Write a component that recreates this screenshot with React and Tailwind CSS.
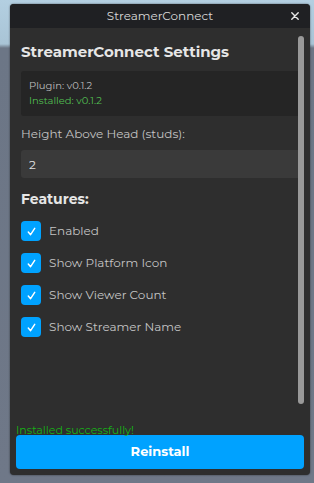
import React, { useState } from 'react';

const FONT = { fontFamily: '"Montserrat", "Noto Sans", "DejaVu Sans", sans-serif' };

const Checkbox = ({ label, checked, onToggle }) => (
  <button type="button" onClick={onToggle} className="flex items-center h-[20px] text-left">
    <span className="w-[20px] h-[20px] rounded-[4px] bg-[#00a2ff] flex items-center justify-center">
      {checked && (
        <svg width="11" height="11" viewBox="0 0 12 12" fill="none">
          <path d="M2.5 6.5 L5 9.5 L9.5 2.5" stroke="#ffffff" strokeWidth="1.6" strokeLinecap="round" strokeLinejoin="round" />
        </svg>
      )}
    </span>
    <span className="ml-[8px] text-[12px] text-[#c4c4c4]">{label}</span>
  </button>
);

const App = () => {
  const [height, setHeight] = useState('2');
  const [features, setFeatures] = useState({
    enabled: true,
    platformIcon: true,
    viewerCount: true,
    streamerName: true,
  });

  const toggle = (key) => setFeatures((f) => ({ ...f, [key]: !f[key] }));

  return (
    <div
      className="w-[314px] h-[483px] pt-[4px] pl-[10px] bg-[linear-gradient(to_bottom,#b3cfe1_0px,#a9c4d6_44px,#6c7686_48px,#6f7888_100%)]"
      style={FONT}
    >
      <div className="w-[300px] h-[471px] rounded-[4px] overflow-hidden bg-[#2e2e2e] flex flex-col shadow-[0_0_2px_rgba(0,0,0,0.6)]">
        {/* title bar */}
        <div className="h-[24px] bg-[#1f2023] flex items-center relative">
          <span className="flex-1 text-center text-[12px] text-[#d8d8d8]">StreamerConnect</span>
          <span className="absolute right-[11px] top-[8px] text-[#e8e8e8]">
            <svg width="8" height="8" viewBox="0 0 8 8">
              <path d="M0.8 0.8 L7.2 7.2 M7.2 0.8 L0.8 7.2" stroke="currentColor" strokeWidth="1.4" strokeLinecap="round" />
            </svg>
          </span>
        </div>

        {/* scroll area */}
        <div className="flex flex-1">
          <div className="flex-1 pl-[11px] pt-[14px]">
            <h1 className="text-[15px] font-bold text-[#e6e6e6] leading-[20px]">StreamerConnect Settings</h1>

            <div className="mt-[9px] h-[45px] bg-[#252525] rounded-l-[3px] pl-[8px] pt-[7px] text-[10px] leading-[15px]">
              <div className="text-[#bdbdbd]">Plugin: v0.1.2</div>
              <div className="text-[#52bf52]">Installed: v0.1.2</div>
            </div>

            <div className="mt-[10px] text-[12px] leading-[16px] text-[#c4c4c4]">Height Above Head (studs):</div>

            <input
              value={height}
              onChange={(e) => setHeight(e.target.value)}
              className="mt-[8px] w-full h-[28px] bg-[#3a3a3a] rounded-l-[3px] pl-[8px] text-[12px] text-[#e0e0e0] outline-none"
            />

            <h2 className="mt-[12px] text-[14px] font-bold text-[#e6e6e6] leading-[18px]">Features:</h2>

            <div className="mt-[13px] flex flex-col gap-[12px]">
              <Checkbox label="Enabled" checked={features.enabled} onToggle={() => toggle('enabled')} />
              <Checkbox label="Show Platform Icon" checked={features.platformIcon} onToggle={() => toggle('platformIcon')} />
              <Checkbox label="Show Viewer Count" checked={features.viewerCount} onToggle={() => toggle('viewerCount')} />
              <Checkbox label="Show Streamer Name" checked={features.streamerName} onToggle={() => toggle('streamerName')} />
            </div>
          </div>
          <div className="w-[6px] mr-[6px] mt-[8px] h-[368px] rounded-full bg-[#999999]" />
        </div>

        {/* footer */}
        <div className="px-[6px] pb-[6px]">
          <div className="text-[11px] leading-[12px] text-[#16b216] translate-y-[2px]">Installed successfully!</div>
          <button
            type="button"
            className="mt-[1px] w-full h-[34px] rounded-[4px] bg-[#00a2ff] text-white text-[13px] font-bold"
          >
            Reinstall
          </button>
        </div>
      </div>
    </div>
  );
};

export default App;
